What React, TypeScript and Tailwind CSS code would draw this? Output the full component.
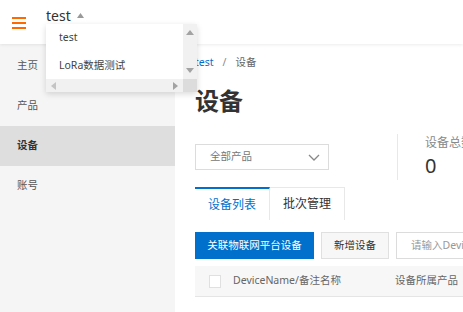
import React from "react";

const font = { fontFamily: '"Noto Sans", "Noto Sans CJK SC", sans-serif' };

const menu = ["主页", "产品", "设备", "账号"];

function ProjectDropdown() {
  return (
    <div className="absolute left-[46px] top-[24px] w-[151px] h-[68px] bg-white shadow-[0_2px_6px_rgba(0,0,0,0.15)] flex flex-col z-20">
      <div className="flex flex-1">
        <div className="flex-1 flex flex-col">
          <div className="h-[28px] flex items-center pl-[13px] text-[10.5px] text-[#444]">test</div>
          <div className="h-[27px] flex items-center pl-[13px] text-[10.5px] text-[#444]">LoRa数据测试</div>
        </div>
        <div className="w-[14px] bg-[#f1f1f1] flex flex-col items-center justify-between py-[6px]">
          <svg width="8" height="5" viewBox="0 0 8 5"><path d="M0 5 L4 0 L8 5 Z" fill="#a3a3a3" /></svg>
          <svg width="8" height="5" viewBox="0 0 8 5"><path d="M0 0 L4 5 L8 0 Z" fill="#a3a3a3" /></svg>
        </div>
      </div>
      <div className="flex h-[13px]">
        <div className="flex-1 bg-[#f1f1f1] flex items-center justify-between px-[5px]">
          <svg width="5" height="8" viewBox="0 0 5 8"><path d="M5 0 L0 4 L5 8 Z" fill="#c4c4c4" /></svg>
          <svg width="5" height="8" viewBox="0 0 5 8"><path d="M0 0 L5 4 L0 8 Z" fill="#a3a3a3" /></svg>
        </div>
        <div className="w-[14px] bg-[#dcdcdc]" />
      </div>
    </div>
  );
}

export default function App() {
  return (
    <div className="w-[463px] h-[312px] overflow-hidden relative bg-white text-[#333]" style={font}>
      {/* top bar */}
      <div className="h-[44px] bg-white flex items-start relative z-10 shadow-[0_1px_3px_rgba(0,0,0,0.08)]">
        <div className="w-[46px] pt-[17px] pl-[12px] flex flex-col gap-[3px]">
          <div className="w-[14px] h-[2px] bg-[#ff6a00]" />
          <div className="w-[14px] h-[2px] bg-[#ff6a00]" />
          <div className="w-[14px] h-[2px] bg-[#ff6a00]" />
        </div>
        <div className="flex items-center gap-[6px] pt-[5px]">
          <span className="text-[14px] text-[#333]">test</span>
          <svg width="7" height="5" viewBox="0 0 7 5"><path d="M0 5 L3.5 0 L7 5 Z" fill="#999" /></svg>
        </div>
      </div>
      <ProjectDropdown />

      <div className="flex h-[268px]">
        {/* side menu */}
        <div className="w-[175px] shrink-0 bg-[#f5f5f5] pt-[2px] flex flex-col">
          {menu.map((m) => (
            <div
              key={m}
              className={
                m === "设备"
                  ? "h-[40px] flex items-center pl-[17px] text-[10.5px] font-bold text-[#333] bg-[#dedede]"
                  : "h-[40px] flex items-center pl-[17px] text-[10.5px] text-[#555]"
              }
            >
              {m}
            </div>
          ))}
        </div>

        {/* main */}
        <div className="w-[500px] shrink-0 pl-[20px] pt-[12px] flex flex-col">
          <div className="flex items-center gap-[9px] text-[10.5px] h-[14px]">
            <span className="text-[#0070cc]">test</span>
            <span className="text-[#888]">/</span>
            <span className="text-[#666]">设备</span>
          </div>
          <div className="mt-[16px] text-[24px] font-bold leading-[30px] text-[#333]">设备</div>

          <div className="mt-[18px] flex items-start h-[46px]">
            <div className="mt-[10px] w-[134px] h-[26px] border border-[#dcdcdc] flex items-center justify-between pl-[14px] pr-[8px] text-[10.5px] text-[#777]">
              <span>全部产品</span>
              <svg width="12" height="7" viewBox="0 0 12 7"><path d="M1 1 L6 6 L11 1" fill="none" stroke="#888" strokeWidth="1.3" /></svg>
            </div>
            <div className="ml-[68px] w-px h-[46px] bg-[#e8e8e8]" />
            <div className="ml-[27px] flex flex-col">
              <span className="text-[12px] text-[#888] leading-[18px] whitespace-nowrap">设备总数</span>
              <span className="text-[20px] text-[#333] leading-[24px] mt-[2px]">0</span>
            </div>
          </div>

          <div className="mt-[7px] flex h-[33px]">
            <div className="w-[75px] border-t-2 border-[#0070cc] border-r border-r-[#e8e8e8] flex items-center justify-center text-[12px] text-[#0070cc]">
              设备列表
            </div>
            <div className="w-[75px] border-t border-r border-[#e8e8e8] bg-white flex items-center justify-center text-[12px] text-[#333]">
              批次管理
            </div>
          </div>

          <div className="mt-[12px] flex gap-[7px] h-[27px] whitespace-nowrap">
            <div className="w-[119px] bg-[#0070cc] text-white text-[10.5px] flex items-center justify-center">关联物联网平台设备</div>
            <div className="w-[68px] bg-[#f7f7f7] border border-[#e0e0e0] text-[10.5px] text-[#333] flex items-center justify-center">新增设备</div>
            <div className="w-[200px] border border-[#dcdcdc] text-[10.5px] text-[#999] flex items-center pl-[14px] overflow-hidden">请输入DeviceName</div>
          </div>

          <div className="mt-[7px] h-[31px] bg-[#f7f7f7] border-b border-[#e5e5e5] flex items-center text-[10.5px] text-[#666] whitespace-nowrap">
            <div className="ml-[14px] w-[12px] h-[13px] bg-white border border-[#e0e0e0]" />
            <span className="ml-[12px]">DeviceName/备注名称</span>
            <span className="ml-[54px]">设备所属产品</span>
          </div>
        </div>
      </div>
    </div>
  );
}
